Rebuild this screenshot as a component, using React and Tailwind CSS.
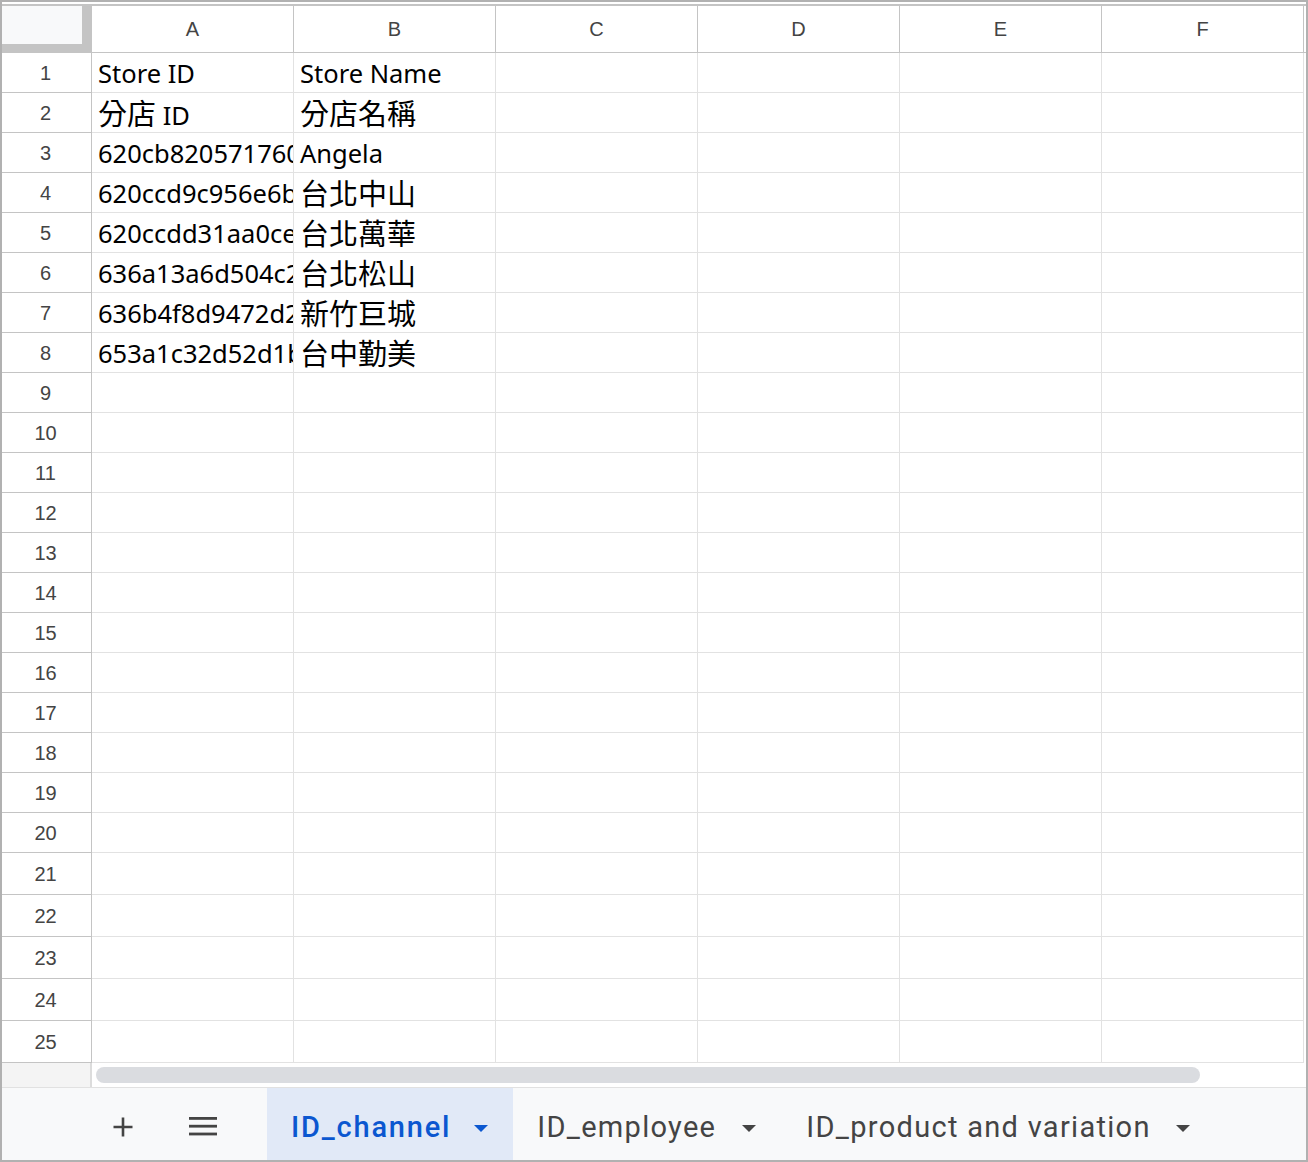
import React from "react";

const COLS = ["A", "B", "C", "D", "E", "F"];
const DATA = {
  1: ["Store ID", "Store Name"],
  2: ["分店 ID", "分店名稱"],
  3: ["620cb8205717600012ab34cd", "Angela"],
  4: ["620ccd9c956e6b0014f2a7c1", "台北中山"],
  5: ["620ccdd31aa0ce0019b3d5e2", "台北萬華"],
  6: ["636a13a6d504c2001e7f9a10", "台北松山"],
  7: ["636b4f8d9472d2001a6c3b8e", "新竹巨城"],
  8: ["653a1c32d52d1b0012e4f7a9", "台中勤美"],
};

function RichText({ text }) {
  const parts = text.split(/([\u3400-\u9fff]+)/).filter(Boolean);
  return (
    <span className="whitespace-pre">
      {parts.map((p, i) =>
        /[\u3400-\u9fff]/.test(p) ? (
          <span key={i} className="text-[29px]">
            {p}
          </span>
        ) : (
          <span key={i}>{p}</span>
        )
      )}
    </span>
  );
}

function Triangle({ color }) {
  return (
    <svg width="14" height="7" viewBox="0 0 14 7" className="shrink-0">
      <polygon points="0,0 14,0 7,7" fill={color} />
    </svg>
  );
}

export default function App() {
  const rows = Array.from({ length: 25 }, (_, i) => i + 1);
  return (
    <div className="w-[1308px] h-[1162px] border-2 border-[#b1b1b1] bg-white flex flex-col overflow-hidden">
      {/* column header */}
      <div className="pt-[2px] bg-white shrink-0">
        <div className="flex h-[49px] border-t-2 border-b border-[#c4c4c4]">
          <div className="w-[90px] shrink-0 bg-[#c4c4c4]">
            <div className="w-[80px] h-[38px] bg-[#f8f9fa]" />
          </div>
          {COLS.map((c) => (
            <div
              key={c}
              className="w-[202px] shrink-0 border-r border-[#c4c4c4] flex items-center justify-center text-[20px] text-[#444] font-['Liberation_Sans',Arial,sans-serif]"
            >
              {c}
            </div>
          ))}
        </div>
      </div>

      {/* rows */}
      <div className="flex flex-col shrink-0">
        {rows.map((r) => (
          <div key={r} className={`flex ${r <= 20 ? "h-[40px]" : "h-[42px]"}`}>
            <div className="w-[90px] shrink-0 border-r border-b border-[#c4c4c4] flex items-center justify-center pr-[2px] text-[20px] text-[#444] font-['Liberation_Sans',Arial,sans-serif]">
              {r}
            </div>
            {COLS.map((c, ci) => {
              const val = DATA[r] ? DATA[r][ci] : null;
              return (
                <div
                  key={c}
                  className="w-[202px] shrink-0 border-r border-b border-[#e2e2e2] overflow-hidden whitespace-nowrap pl-[6px] pt-[2px] flex items-center text-[25.5px] text-black font-['Noto_Sans','Noto_Sans_CJK_TC',sans-serif]"
                >
                  {val ? <RichText text={val} /> : null}
                </div>
              );
            })}
          </div>
        ))}
      </div>

      {/* scrollbar row */}
      <div className="flex h-[25px] shrink-0 border-b border-[#e1e1e1]">
        <div className="w-[90px] shrink-0 bg-[#f4f4f4] border-r-2 border-[#dcdcdc]" />
        <div className="flex-1 flex items-center pl-[4px]">
          <div className="w-[1104px] h-[16px] rounded-full bg-[#dadce0]" />
        </div>
      </div>

      {/* tab bar */}
      <div className="flex-1 flex bg-[#f8f9fa] font-['Roboto','Liberation_Sans',sans-serif] text-[29px]">
        <div className="w-[265px] shrink-0 flex items-center pt-[6px]">
          <svg width="20" height="20" viewBox="0 0 20 20" className="ml-[111px]">
            <path d="M10 0.5V19.5M0.5 10H19.5" stroke="#444" strokeWidth="2.6" />
          </svg>
          <svg width="28" height="20" viewBox="0 0 28 20" className="ml-[56px]">
            <rect x="0" y="0" width="28" height="2.8" fill="#444" />
            <rect x="0" y="7.8" width="28" height="2.8" fill="#444" />
            <rect x="0" y="15.6" width="28" height="2.8" fill="#444" />
          </svg>
        </div>
        <div className="flex items-center bg-[#e1e9f7] pt-[8px] pl-[24px] pr-[25px] gap-[23px] text-[#0b57d0] font-medium tracking-[1.8px]">
          <span>ID_channel</span>
          <Triangle color="#0b57d0" />
        </div>
        <div className="flex items-center pt-[8px] pl-[24px] pr-[26px] gap-[26px] text-[#444] tracking-[1.3px]">
          <span>ID_employee</span>
          <Triangle color="#444" />
        </div>
        <div className="flex items-center pt-[8px] pl-[24px] pr-[26px] gap-[25px] text-[#444] tracking-[1.3px]">
          <span>ID_product and variation</span>
          <Triangle color="#444" />
        </div>
      </div>
    </div>
  );
}
